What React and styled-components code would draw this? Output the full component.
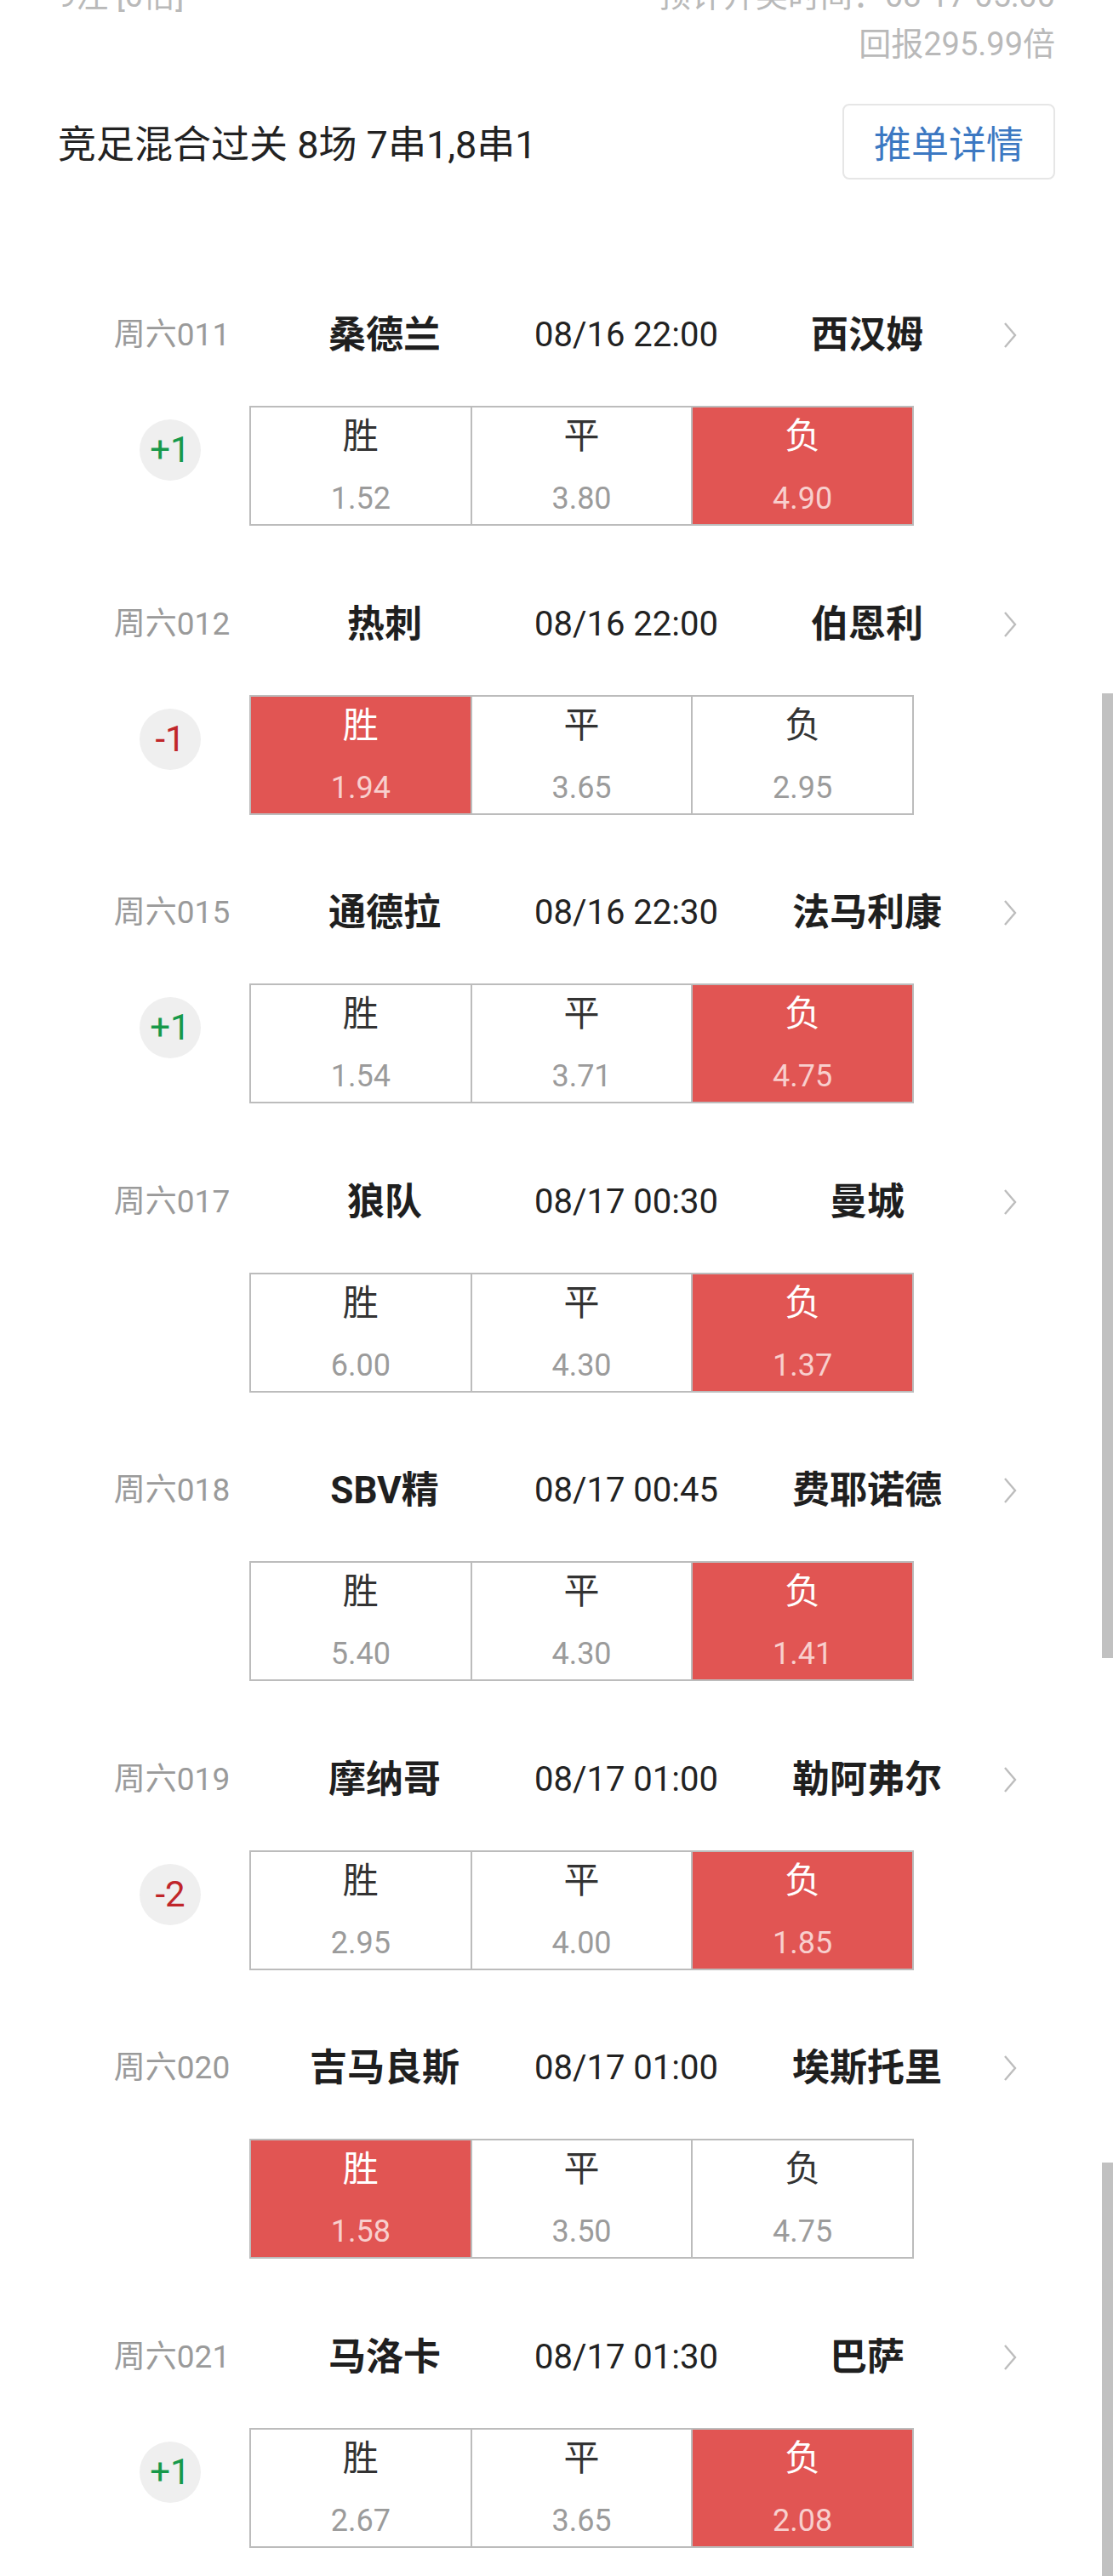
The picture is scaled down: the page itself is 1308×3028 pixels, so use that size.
import { createGlobalStyle, styled } from "styled-components";

const GlobalStyle = createGlobalStyle`
    html, body {
        margin: 0;
        padding: 0;
        background: #fff;
    }
    body {
        height: 3028px;
        overflow: hidden;
        font-family: Roboto, "Noto Sans CJK SC", sans-serif;
        color: #222;
    }
`;

const matches = [
    { code: '周六011', home: '桑德兰', time: '08/16 22:00', away: '西汉姆', handicap: '+1', odds: ['1.52', '3.80', '4.90'], pick: 2 },
    { code: '周六012', home: '热刺', time: '08/16 22:00', away: '伯恩利', handicap: '-1', odds: ['1.94', '3.65', '2.95'], pick: 0 },
    { code: '周六015', home: '通德拉', time: '08/16 22:30', away: '法马利康', handicap: '+1', odds: ['1.54', '3.71', '4.75'], pick: 2 },
    { code: '周六017', home: '狼队', time: '08/17 00:30', away: '曼城', handicap: null, odds: ['6.00', '4.30', '1.37'], pick: 2 },
    { code: '周六018', home: 'SBV精', time: '08/17 00:45', away: '费耶诺德', handicap: null, odds: ['5.40', '4.30', '1.41'], pick: 2 },
    { code: '周六019', home: '摩纳哥', time: '08/17 01:00', away: '勒阿弗尔', handicap: '-2', odds: ['2.95', '4.00', '1.85'], pick: 2 },
    { code: '周六020', home: '吉马良斯', time: '08/17 01:00', away: '埃斯托里', handicap: null, odds: ['1.58', '3.50', '4.75'], pick: 0 },
    { code: '周六021', home: '马洛卡', time: '08/17 01:30', away: '巴萨', handicap: '+1', odds: ['2.67', '3.65', '2.08'], pick: 2 },
];

const labels = ['胜', '平', '负'];

const Page = styled.div`
    position: relative;
    padding: 0 68px;
    height: 3028px;
    overflow: hidden;
`;

const Info = styled.div`
    margin-top: -33px;
    font-size: 38px;
    line-height: 57px;
    color: #b9b9b9;
`;

const InfoLine = styled.div`
    display: flex;
    justify-content: ${({ $end }) => ($end ? 'flex-end' : 'space-between')};
`;

const TitleRow = styled.div`
    display: flex;
    align-items: center;
    justify-content: space-between;
    margin-top: 41px;
`;

const Title = styled.div`
    font-size: 45px;
    color: #222;
`;

const DetailButton = styled.button`
    width: 250px;
    height: 89px;
    border: 2px solid #e6e6e6;
    border-radius: 8px;
    background: #fff;
    color: #3c78c2;
    font-family: inherit;
    font-size: 44px;
    padding: 0;
`;

const List = styled.div`
    margin-top: 143px;
`;

const Match = styled.div`
    height: 339.5px;
`;

const Header = styled.div`
    display: grid;
    grid-template-columns: 268px 232px 336px 230px 106px;
    height: 80px;
    align-items: center;
    text-align: center;
    line-height: 80px;
    white-space: nowrap;
`;

const Code = styled.div`
    font-size: 37px;
    color: #9a9a9a;
`;

const Team = styled.div`
    font-size: 44px;
    font-weight: bold;
    color: #1f1f1f;
`;

const Time = styled.div`
    font-size: 40px;
    color: #222;
`;

const Arrow = styled.div`
    display: flex;
    justify-content: center;
    align-items: center;
`;

const OddsRow = styled.div`
    display: flex;
    align-items: flex-start;
    margin-top: 43px;
    padding-left: 96px;
`;

const Badge = styled.div`
    width: 72px;
    height: 72px;
    margin-top: 16px;
    margin-right: 57px;
    border-radius: 50%;
    background: ${({ $empty }) => ($empty ? 'transparent' : '#efefef')};
    color: ${({ $plus }) => ($plus ? '#17994a' : '#c0262a')};
    font-size: 42px;
    line-height: 72px;
    text-align: center;
`;

const OddsBox = styled.div`
    display: flex;
    width: 781px;
    height: 141px;
    box-sizing: border-box;
    border: 2px solid #bcbcbc;
`;

const Cell = styled.div`
    flex: 1;
    display: flex;
    flex-direction: column;
    align-items: center;
    padding-top: 12px;
    background: ${({ $active }) => ($active ? '#e15553' : '#fff')};
    & + & {
        border-left: 2px solid #bcbcbc;
    }
`;

const Label = styled.div`
    font-size: 42px;
    line-height: 44px;
    color: ${({ $active }) => ($active ? '#fff' : '#333')};
`;

const Odd = styled.div`
    margin-top: 31px;
    font-size: 36px;
    line-height: 40px;
    color: ${({ $active }) => ($active ? '#f8cfcd' : '#9b9b9b')};
`;

const ScrollStrip = styled.div`
    position: absolute;
    right: 0;
    width: 13px;
    background: #c1c1c1;
`;

const Chevron = () => (
    <svg width="22" height="34" viewBox="0 0 22 34">
        <polyline points="5,3 17,17 5,31" fill="none" stroke="#bdbdbd" strokeWidth="2.4" />
    </svg>
);

const MatchItem = ({ match }) => (
    <Match>
        <Header>
            <Code>{match.code}</Code>
            <Team>{match.home}</Team>
            <Time>{match.time}</Time>
            <Team>{match.away}</Team>
            <Arrow><Chevron /></Arrow>
        </Header>
        <OddsRow>
            <Badge $empty={!match.handicap} $plus={match.handicap?.startsWith('+')}>
                {match.handicap}
            </Badge>
            <OddsBox>
                {labels.map((label, i) => (
                    <Cell key={label} $active={match.pick === i}>
                        <Label $active={match.pick === i}>{label}</Label>
                        <Odd $active={match.pick === i}>{match.odds[i]}</Odd>
                    </Cell>
                ))}
            </OddsBox>
        </OddsRow>
    </Match>
);

export default function App() {
    return (
        <>
            <GlobalStyle />
            <Page>
                <Info>
                    <InfoLine>
                        <span>9注 [0倍]</span>
                        <span>预计开奖时间：08-17 05:00</span>
                    </InfoLine>
                    <InfoLine $end>
                        <span>回报295.99倍</span>
                    </InfoLine>
                </Info>
                <TitleRow>
                    <Title>竞足混合过关 8场 7串1,8串1</Title>
                    <DetailButton>推单详情</DetailButton>
                </TitleRow>
                <List>
                    {matches.map((m) => (
                        <MatchItem key={m.code} match={m} />
                    ))}
                </List>
                <ScrollStrip style={{ top: 815, height: 1134 }} />
                <ScrollStrip style={{ top: 2542, height: 486 }} />
            </Page>
        </>
    );
}
